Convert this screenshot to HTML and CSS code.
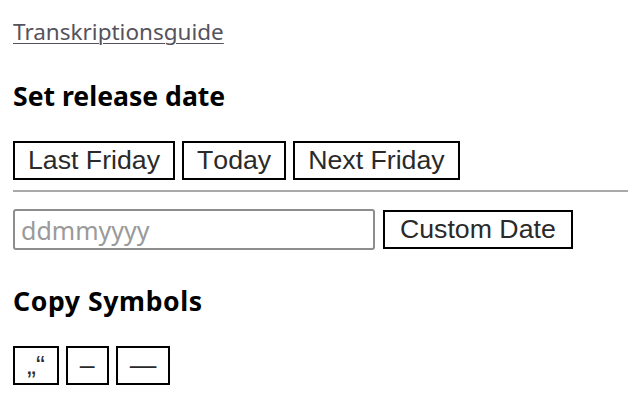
FILE: index.html
```html
<!DOCTYPE html>
<html>
<head>
<meta charset="utf-8">
<link rel="stylesheet" href="styles.css">
</head>
<body>
<div class="page">
  <a class="guide" href="#">Transkriptionsguide</a>
  <h2 class="title">Set release date</h2>
  <div class="row">
    <button class="btn">Last Friday</button>
    <button class="btn">Today</button>
    <button class="btn">Next Friday</button>
  </div>
  <hr class="sep">
  <div class="row row-date">
    <input class="date" type="text" placeholder="ddmmyyyy">
    <button class="btn btn-custom">Custom Date</button>
  </div>
  <h2 class="title title2">Copy Symbols</h2>
  <div class="row">
    <button class="btn sym">„“</button>
    <button class="btn sym">–</button>
    <button class="btn sym">—</button>
  </div>
</div>
</body>
</html>
```
FILE: styles.css
```css
html, body {
  margin: 0;
  background: #fff;
}
.page {
  padding: 18px 12px 0 13px;
  font-family: "Noto Sans", "Open Sans", sans-serif;
}
.guide {
  display: block;
  width: max-content;
  font-size: 22.5px;
  line-height: 28px;
  color: #56525c;
  text-decoration: underline;
  text-decoration-thickness: 1px;
  text-underline-offset: 3px;
}
.title {
  margin: 34px 0 0;
  font-size: 26.6px;
  line-height: 32px;
  font-weight: 700;
  color: #000;
}
.title2 {
  margin-top: 35px;
  letter-spacing: 0.6px;
}
.row {
  display: flex;
  gap: 7px;
  align-items: center;
}
.title + .row {
  margin-top: 29px;
}
.row-date {
  gap: 8px;
}
.btn {
  font-family: "Liberation Sans", Arial, sans-serif;
  font-size: 26.7px;
  font-kerning: none;
  line-height: 31px;
  color: #2a2a2a;
  background: #fff;
  border: 2px solid #000;
  border-radius: 0;
  padding: 2px 13px;
  margin: 0;
}
.btn-custom {
  padding: 2px 15px;
}
.sep {
  margin: 10px 0 17px;
  border: 0;
  border-top: 2px solid #a9a9a9;
}
.date {
  width: 362px;
  height: 41px;
  box-sizing: border-box;
  border: 2px solid #8d8d8d;
  border-radius: 3px;
  padding: 0 6px;
  margin: 0;
  font-family: "Noto Sans", "Open Sans", sans-serif;
  font-size: 25px;
}
.date::placeholder {
  color: #9a9a9a;
}
.sym {
  height: 39px;
  padding: 0 12px;
}
```
